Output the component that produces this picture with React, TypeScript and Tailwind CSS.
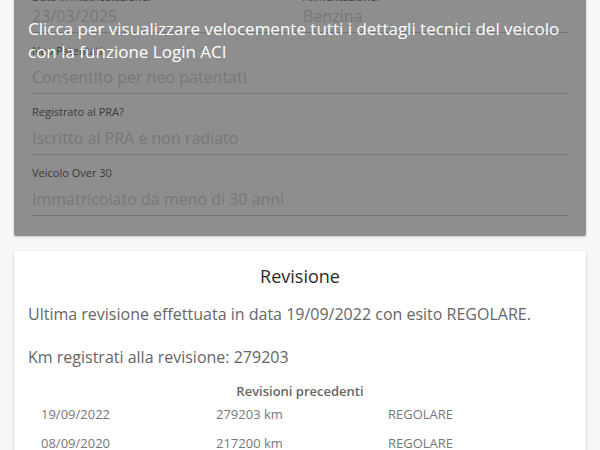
import React from "react";

function Field({ label, value, first = false }: { label: string; value: string; first?: boolean }) {
  return (
    <div className={first ? "" : "mt-[10px]"}>
      <div className={`text-[11px] ${first ? "leading-[14px]" : "leading-[16px]"} text-[#6b6b6b]`}>{label}</div>
      <div
        className={`${first ? "" : "mt-[6px]"} text-[16px] leading-[24px] pb-[4px] text-[#d6d6d6] border-b border-[#d5d5d5] whitespace-nowrap`}
      >
        {value}
      </div>
    </div>
  );
}

export default function App() {
  const rows = [
    ["19/09/2022", "279203 km", "REGOLARE"],
    ["08/09/2020", "217200 km", "REGOLARE"],
    ["10/09/2018", "160520 km", "REGOLARE"],
  ];
  return (
    <div
      className="w-[600px] h-[450px] overflow-hidden bg-[#f7f7f7]"
      style={{ fontFamily: '"Open Sans", "Noto Sans", sans-serif' }}
    >
      <div className="px-[14px]">
        {/* Dati tecnici card with login overlay */}
        <div className="relative -mt-[26px] bg-white rounded-[2px] shadow-[0_1px_3px_rgba(0,0,0,0.18)] pt-[16px] px-[18px] pb-[20px]">
          <div className="grid grid-cols-2 gap-x-[6px]">
            <Field first label="Data immatricolazione:" value="23/03/2025" />
            <Field first label="Alimentazione:" value="Benzina" />
          </div>
          <Field label="Neo Patentati:" value="Consentito per neo patentati" />
          <Field label="Registrato al PRA?" value="Iscritto al PRA e non radiato" />
          <Field label="Veicolo Over 30" value="Immatricolato da meno di 30 anni" />

          <div className="absolute inset-0 bg-[rgba(0,0,0,0.443)] rounded-[2px] px-[14px] pt-[43px] text-white text-[17px] leading-[23px]">
            Clicca per visualizzare velocemente tutti i dettagli tecnici del veicolo
            <br />
            con la funzione Login ACI
          </div>
        </div>

        {/* Revisione card */}
        <div className="mt-[15px] bg-white rounded-[2px] shadow-[0_1px_3px_rgba(0,0,0,0.18)] px-[14px] pt-[13px] pb-[10px]">
          <div className="text-center text-[18px] leading-[24px] font-medium text-[#2b2b2b]">Revisione</div>
          <div className="mt-[14px] text-[16px] leading-[24px] text-[#666]">
            Ultima revisione effettuata in data 19/09/2022 con esito REGOLARE.
          </div>
          <div className="mt-[19px] text-[16px] leading-[24px] text-[#666]">
            Km registrati alla revisione: 279203
          </div>
          <div className="mt-[13px] text-center text-[13px] leading-[18px] font-semibold text-[#666]">
            Revisioni precedenti
          </div>
          <div className="pl-[13px]">
            {rows.map((r) => (
              <div key={r[0]} className="grid grid-cols-[175px_172px_1fr] text-[13px] leading-[29px] text-[#777]">
                <div>{r[0]}</div>
                <div>{r[1]}</div>
                <div>{r[2]}</div>
              </div>
            ))}
          </div>
        </div>
      </div>
    </div>
  );
}
